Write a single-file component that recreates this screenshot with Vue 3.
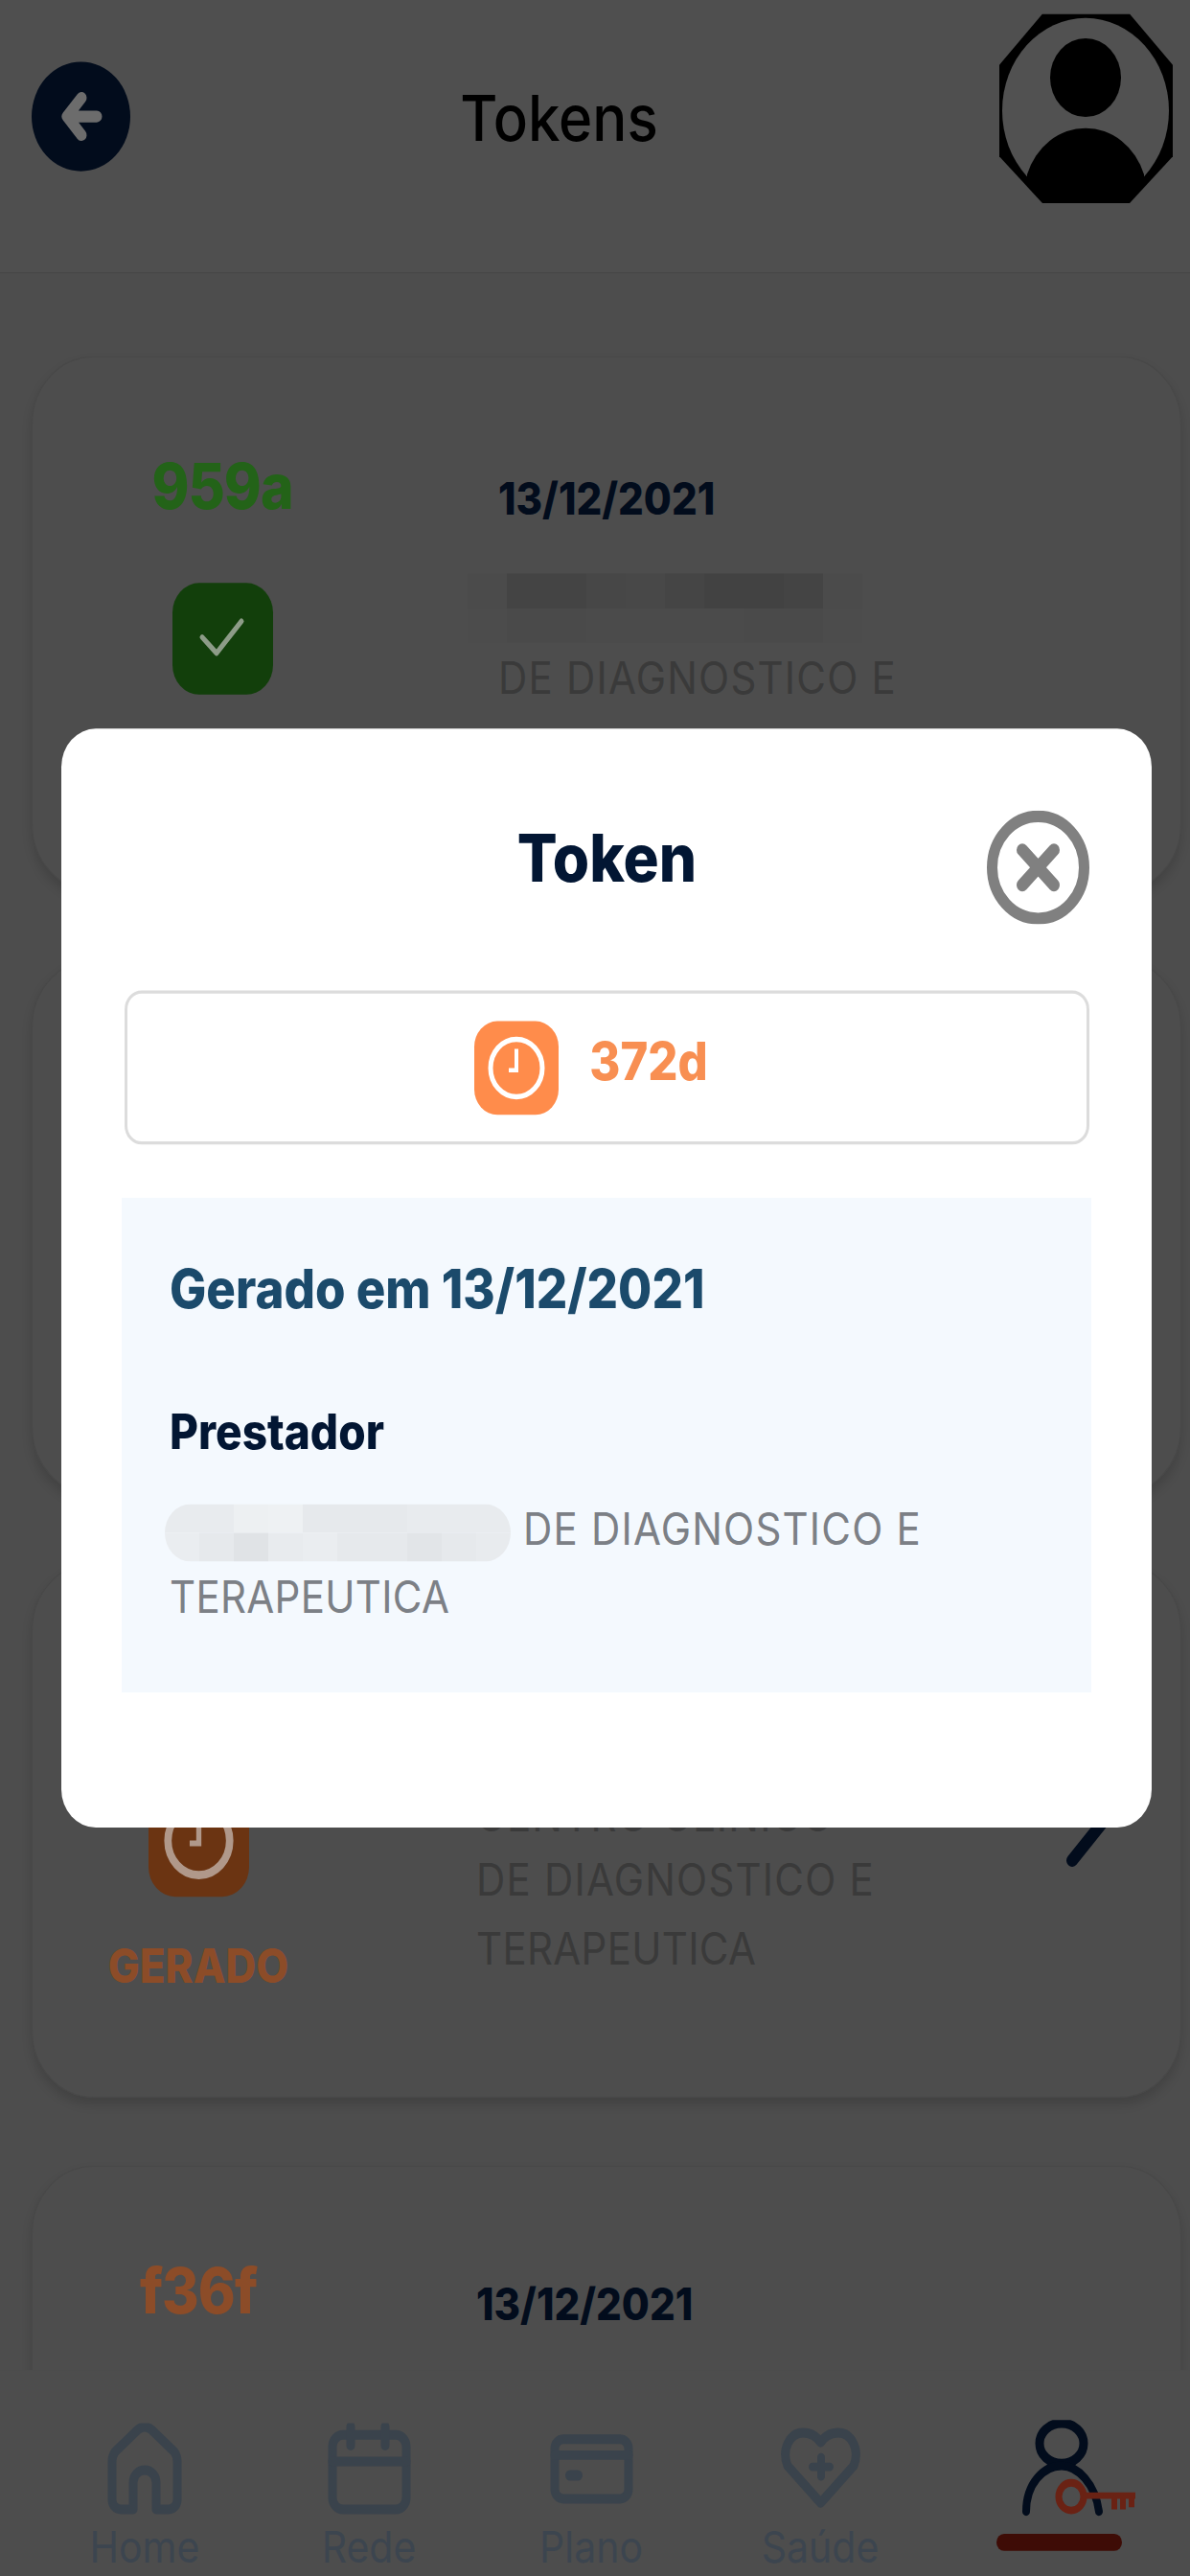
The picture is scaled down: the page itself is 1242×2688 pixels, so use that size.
<template>
  <div class="screen">
    <header class="top">
      <button class="back">
        <svg viewBox="0 0 103 103" width="103" height="103">
          <path d="M52 34 37 51.5 52 69M37 51.5H68" fill="none" stroke="#6c6c6c" stroke-width="11" stroke-linecap="round" stroke-linejoin="round" />
        </svg>
      </button>
      <h1>Tokens</h1>
      <svg class="avatar" viewBox="0 0 181 178" width="181" height="178">
        <polygon points="45,0 136,0 181,48 181,134 136,178 45,178 0,134 0,48" fill="#000" />
        <circle cx="90" cy="91" r="87" fill="#515151" />
        <ellipse cx="90" cy="60" rx="37" ry="37" fill="#000" />
        <path d="M29 151A64.5 64.5 0 0 1 151 151V162L134 178H46L29 162Z" fill="#000" />
      </svg>
    </header>

    <main class="list">
      <section v-for="card in cards" :key="card.id" class="card" :class="{ wide: card.wide }">
        <div class="token-col">
          <div class="token-code" :style="{ color: card.accent }">{{ card.code }}</div>
          <div v-if="card.icon" class="status-icon" :style="{ background: card.iconBg }">
            <svg v-if="card.icon === 'check'" viewBox="0 0 105 105" width="105" height="105">
              <path d="M31 51 46 66 72 36" fill="none" stroke="#8d9c88" stroke-width="5" stroke-linecap="round" stroke-linejoin="round" />
            </svg>
            <svg v-else viewBox="0 0 88 88" width="105" height="105">
              <circle cx="44" cy="44" r="27" fill="none" stroke="#b0988a" stroke-width="6.5" />
              <path d="M44 26V46H36" fill="none" stroke="#b0988a" stroke-width="4.5" />
            </svg>
          </div>
          <div v-if="card.status" class="status-label" :style="{ color: card.accent }">{{ card.status }}</div>
        </div>
        <div v-if="card.date" class="token-info">
          <div class="token-date">{{ card.date }}</div>
          <div v-if="card.blurred" class="mosaic dark">
            <i v-for="(c, i) in darkCells" :key="i" :style="{ background: c }"></i>
          </div>
          <div v-for="line in card.lines" :key="line" class="token-line" :class="{ tight: line === 'TERAPEUTICA' }">{{ line }}</div>
        </div>
        <svg v-if="card.chevron" class="chevron" viewBox="0 0 48 83" width="48" height="83">
          <path d="M8 8 40 40 8 76" fill="none" stroke="#020c1c" stroke-width="12" stroke-linecap="round" stroke-linejoin="round" />
        </svg>
      </section>
    </main>

    <nav class="tabs">
      <a class="tab">
        <span class="tab-icon">
          <svg viewBox="0 0 78 86" width="78" height="86" class="line">
            <path d="M27 81V56A12 12 0 0 1 51 56V81H64A9 9 0 0 0 73 72V36Q73 31 70 27L46 6Q39 1 32 6L8 27Q5 31 5 36V72A9 9 0 0 0 14 81Z" />
          </svg>
        </span>
        <span class="tab-label">Home</span>
      </a>
      <a class="tab">
        <span class="tab-icon">
          <svg viewBox="0 0 87 86" width="87" height="86" class="line">
            <rect x="5" y="11" width="77" height="70" rx="11" />
            <path d="M5 36H82M24 3V21M60 3V21" />
          </svg>
        </span>
        <span class="tab-label">Rede</span>
      </a>
      <a class="tab">
        <span class="tab-icon">
          <svg viewBox="0 0 87 66" width="87" height="66" class="line">
            <rect x="5" y="5" width="77" height="56" rx="9" />
            <path d="M5 20H82" />
            <path d="M21 39H29" stroke-width="10" />
          </svg>
        </span>
        <span class="tab-label">Plano</span>
      </a>
      <a class="tab">
        <span class="tab-icon">
          <svg viewBox="0 0 87 77" width="87" height="77" class="line">
            <path d="M43.5 71 9 36C2 20 12 5 25 5 33 5 39 8 43.5 14 48 8 54 5 62 5 75 5 85 20 78 36Z" />
            <path d="M44 28V46M35 37H53" stroke-width="8" />
          </svg>
        </span>
        <span class="tab-label">Saúde</span>
      </a>
      <a class="tab active">
        <span class="tab-icon">
          <svg viewBox="0 0 120 92" width="120" height="92" class="person">
            <ellipse cx="43" cy="22" rx="23" ry="19" fill="none" stroke="#020c1c" stroke-width="9" />
            <path d="M6 86C6 60 24 43 43 43 60 43 78 60 82 86" fill="none" stroke="#020c1c" stroke-width="8" stroke-linecap="round" />
            <circle cx="53" cy="72" r="13" fill="#4d4d4d" stroke="#6a2214" stroke-width="7" />
            <path d="M66 71H120M98 71V84M107 71V84M116 71V82" fill="none" stroke="#6a2214" stroke-width="6" />
          </svg>
        </span>
        <span class="tab-bar"></span>
      </a>
    </nav>

    <div class="overlay">
      <div class="modal">
        <div class="modal-head">
          <h2>Token</h2>
          <svg class="close" viewBox="0 0 107 107" width="107" height="107">
            <circle cx="53.5" cy="53.5" r="48" fill="none" stroke="#808080" stroke-width="11" />
            <path d="M37 37 70 70M70 37 37 70" fill="none" stroke="#808080" stroke-width="12" stroke-linecap="round" />
          </svg>
        </div>

        <div class="time-box">
          <span class="clock">
            <svg viewBox="0 0 88 88" width="88" height="88">
              <circle cx="44" cy="44" r="27" fill="none" stroke="#fff" stroke-width="5" />
              <path d="M44 26V46H36" fill="none" stroke="#fff" stroke-width="4" />
            </svg>
          </span>
          <span class="time-left">372d</span>
        </div>

        <div class="panel">
          <div class="generated">Gerado em 13/12/2021</div>
          <div class="panel-label">Prestador</div>
          <div class="panel-text">
            <span class="mosaic light">
              <i v-for="(c, i) in lightCells" :key="i" :style="{ background: c }"></i>
            </span>
            DE DIAGNOSTICO E <span class="tight">TERAPEUTICA</span>
          </div>
        </div>
      </div>
    </div>
  </div>
</template>

<script setup>
const cards = [
  {
    id: 1,
    wide: true,
    code: '959a',
    accent: '#236318',
    icon: 'check',
    iconBg: '#123f0b',
    date: '13/12/2021',
    blurred: true,
    lines: ['DE DIAGNOSTICO E', 'TERAPEUTICA'],
  },
  { id: 2 },
  {
    id: 3,
    code: '',
    accent: '#8c4c28',
    icon: 'clock',
    iconBg: '#6b3412',
    status: 'GERADO',
    date: ' ',
    lines: ['CENTRO CLINICO', 'DE DIAGNOSTICO E', 'TERAPEUTICA'],
    chevron: true,
  },
  { id: 4, code: 'f36f', accent: '#8c4c28', date: '13/12/2021', lines: [] },
];

const darkCells = [
  '#4b4b4b', '#444444', '#444444', '#474747', '#484848', '#454545', '#424242', '#424242', '#444444', '#4b4b4b',
  '#4c4c4c', '#4a4a4a', '#4a4a4a', '#4b4b4b', '#4b4b4b', '#4b4b4b', '#4b4b4b', '#4a4a4a', '#4a4a4a', '#4c4c4c',
];

const lightCells = [
  '#e8ebee', '#e8ebee', '#edf0f2', '#eef1f3', '#e6e9ec', '#e6e9ec', '#e6e9ec', '#e8ebee', '#e8ebee', '#e8ebee',
  '#eaedf0', '#e6e9ec', '#e0e3e6', '#e8ebee', '#eaedf0', '#e6e9ec', '#e6e9ec', '#e2e5e8', '#e6e9ec', '#e8ebee',
];
</script>

<style>
html,
body {
  margin: 0;
  width: 1242px;
  height: 2688px;
  overflow: hidden;
  background: #4d4d4d;
}
</style>

<style scoped>
.screen {
  position: relative;
  display: flex;
  flex-direction: column;
  width: 1242px;
  height: 2421.6px;
  overflow: hidden;
  background: #4d4d4d;
  font-family: Inter, "Noto Sans", sans-serif;
  transform: scaleY(1.11);
  transform-origin: top left;
}

.top {
  flex: 0 0 257px;
  box-sizing: border-box;
  display: flex;
  align-items: center;
  justify-content: space-between;
  padding: 0 18px 37px 33px;
  background: #4f4f4f;
  border-bottom: 1px solid #474747;
}

.back {
  width: 103px;
  height: 103px;
  padding: 0;
  border: none;
  border-radius: 50%;
  background: #020c1c;
}

.back svg,
.clock svg,
.status-icon svg {
  display: block;
}

.top h1 {
  margin: 0 12px 0 0;
  font-size: 60px;
  font-weight: 500;
  color: #000;
}

.avatar {
  margin-top: -16px;
}

.list {
  flex: 1;
  min-height: 0;
  overflow: hidden;
  display: flex;
  flex-direction: column;
  gap: 64px;
  padding: 78px 9px 0 33px;
}

.card {
  flex: 0 0 503px;
  box-sizing: border-box;
  display: flex;
  align-items: flex-start;
  padding: 87px 73px 0 78px;
  border: 1px solid #484848;
  border-radius: 64px;
  box-shadow: 0 6px 10px rgba(0, 0, 0, 0.14);
}

.card.wide {
  padding-top: 91px;
}

.token-col {
  flex: 0 0 190px;
  display: flex;
  flex-direction: column;
  align-items: center;
}

.card.wide .token-col {
  flex-basis: 240px;
}

.token-code {
  height: 60px;
  line-height: 60px;
  font-size: 59px;
  font-weight: 800;
  letter-spacing: -1px;
}

.status-icon {
  margin-top: 61px;
  width: 105px;
  height: 105px;
  border-radius: 28px;
}

.status-label {
  margin-top: 40px;
  line-height: 50px;
  font-size: 44px;
  font-weight: 800;
}

.token-info {
  margin: 12px 0 0 195px;
}

.card.wide .token-info {
  margin-left: 168px;
}

.token-date {
  height: 60px;
  line-height: 60px;
  font-size: 42px;
  font-weight: 800;
  color: #020c1c;
  margin-bottom: 40px;
}

.token-line {
  line-height: 65px;
  font-size: 42px;
  letter-spacing: 1.2px;
  color: #3a3a3a;
  white-space: nowrap;
}

.token-date + .token-line {
  padding-top: 5px;
  margin-bottom: -5px;
}

.tight {
  letter-spacing: 0.3px;
}

.mosaic {
  display: inline-grid;
  grid-template-columns: repeat(10, 1fr);
  grid-auto-rows: 1fr;
  overflow: hidden;
}

.mosaic.dark {
  display: grid;
  width: 412px;
  height: 65px;
  margin-left: -32px;
}

.mosaic.light {
  width: 361px;
  height: 54px;
  margin: 0 0 0 -5px;
  border-radius: 28px;
  vertical-align: middle;
}

.chevron {
  margin: 116px 0 0 auto;
}

.tabs {
  position: relative;
  flex: 0 0 194px;
  display: grid;
  grid-template-columns: 234px 234px 230px 248px 251px;
  padding-left: 34px;
  background: #4d4d4d;
}

.tab {
  display: flex;
  flex-direction: column;
  align-items: center;
}

.tab-icon {
  height: 110px;
  margin-top: 38px;
  display: flex;
  align-items: center;
}

.line {
  fill: none;
  stroke: #3a434c;
  stroke-width: 9;
  stroke-linecap: round;
  stroke-linejoin: round;
}

.tab-label {
  margin-top: -2px;
  line-height: 40px;
  font-size: 41px;
  color: #3c454f;
}

.person {
  margin-left: 38px;
}

.tab-bar {
  width: 131px;
  height: 16px;
  margin-top: 6px;
  border-radius: 8px;
  background: #3e0c06;
}

.overlay {
  position: absolute;
  inset: 0;
  padding: 685px 0 0 64px;
}

.modal {
  box-sizing: border-box;
  width: 1138px;
  height: 1033px;
  padding: 77px 65px 0 66px;
  border-radius: 36px;
  background: #fff;
}

.modal-head {
  display: grid;
  grid-template-columns: 107px 1fr 107px;
  margin-bottom: 62px;
}

.modal-head h2 {
  grid-column: 2;
  margin: -9px 0 0;
  text-align: center;
  line-height: 107px;
  font-size: 62px;
  font-weight: 800;
  color: #021633;
}

.time-box {
  box-sizing: border-box;
  height: 145px;
  display: flex;
  align-items: center;
  justify-content: center;
  gap: 32px;
  padding-right: 33px;
  margin-bottom: 50px;
  border: 3px solid #dcdcdc;
  border-radius: 18px;
}

.clock {
  width: 88px;
  height: 88px;
  border-radius: 24px;
  background: #ff8c4b;
}

.time-left {
  margin-bottom: 12px;
  font-size: 49px;
  font-weight: 800;
  color: #f88f52;
}

.panel {
  box-sizing: border-box;
  height: 465px;
  margin: 0 -2px 0 -3px;
  padding: 54px 50px 0;
  background: #f4f9fe;
}

.generated {
  line-height: 64px;
  font-size: 51px;
  font-weight: 800;
  color: #1b4a6b;
}

.panel-label {
  margin-top: 71px;
  line-height: 60px;
  font-size: 46px;
  font-weight: 800;
  color: #021633;
}

.panel-text {
  margin-top: 30px;
  line-height: 64.4px;
  font-size: 42px;
  letter-spacing: 1.2px;
  color: #7c8086;
}
</style>
